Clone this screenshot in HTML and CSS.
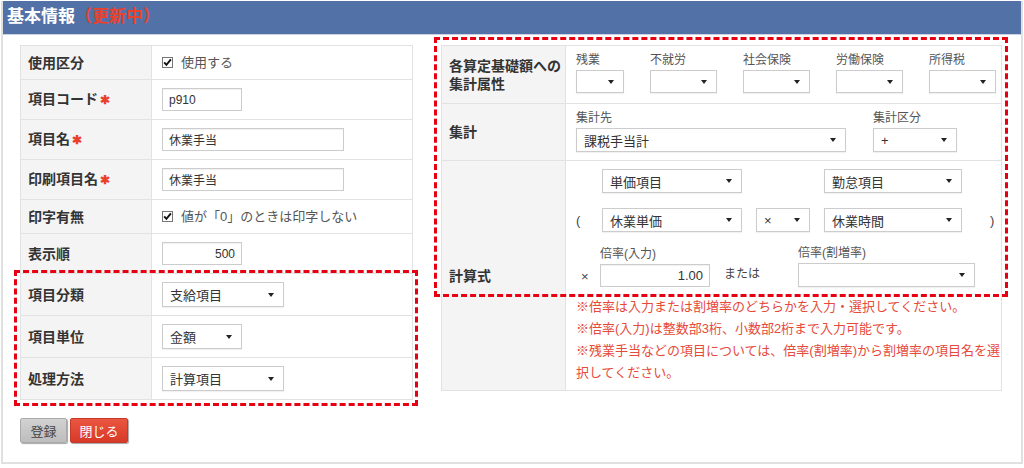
FILE: index.html
```html
<!DOCTYPE html>
<html lang="ja">
<head>
  <meta charset="UTF-8" />
  <title>基本情報</title>
  <link rel="stylesheet" href="styles.css">
</head>
<body>
  <div class="frame">
    <header class="page-head">
      <h1>基本情報<span class="status">（更新中）</span></h1>
    </header>

    <div class="content">
      <div class="left">
        <table class="form-table">
          <colgroup><col class="label-col"><col></colgroup>
          <tr class="row-check">
            <th>使用区分</th>
            <td>
              <label class="check">
                <svg width="11" height="11" viewBox="0 0 11 11"><rect x="0.5" y="0.5" width="10" height="10" fill="#fff" stroke="#777"/><path d="M2.2 5.4 L4.4 7.8 L8.9 2.4" fill="none" stroke="#111" stroke-width="1.9"/></svg>
                使用する
              </label>
            </td>
          </tr>
          <tr class="row-input">
            <th>項目コード<span class="req">✱</span></th>
            <td><input class="text-input w80" type="text" value="p910"></td>
          </tr>
          <tr class="row-input">
            <th>項目名<span class="req">✱</span></th>
            <td><input class="text-input w182" type="text" value="休業手当"></td>
          </tr>
          <tr class="row-input">
            <th>印刷項目名<span class="req">✱</span></th>
            <td><input class="text-input w182" type="text" value="休業手当"></td>
          </tr>
          <tr class="row-check">
            <th>印字有無</th>
            <td>
              <label class="check">
                <svg width="11" height="11" viewBox="0 0 11 11"><rect x="0.5" y="0.5" width="10" height="10" fill="#fff" stroke="#777"/><path d="M2.2 5.4 L4.4 7.8 L8.9 2.4" fill="none" stroke="#111" stroke-width="1.9"/></svg>
                値が「0」のときは印字しない
              </label>
            </td>
          </tr>
          <tr class="row-input">
            <th>表示順</th>
            <td><input class="text-input w80 num" type="text" value="500"></td>
          </tr>
        </table>

        <div class="highlight">
          <table class="form-table">
            <colgroup><col class="label-col"><col></colgroup>
            <tr class="row-select">
              <th>項目分類</th>
              <td><div class="select tall w122">支給項目</div></td>
            </tr>
            <tr class="row-select">
              <th>項目単位</th>
              <td><div class="select tall w80">金額</div></td>
            </tr>
            <tr class="row-select">
              <th>処理方法</th>
              <td><div class="select tall w122">計算項目</div></td>
            </tr>
          </table>
        </div>

        <div class="buttons">
          <button class="btn btn-gray">登録</button>
          <button class="btn btn-red">閉じる</button>
        </div>
      </div>

      <div class="right">
        <div class="highlight-box"></div>
        <table class="form-table">
          <colgroup><col class="label-col-r"><col></colgroup>
          <tr class="row-attr">
            <th>各算定基礎額への集計属性</th>
            <td class="top">
              <div class="attr-list">
                <div class="field"><span class="sub-label">残業</span><div class="select w48"></div></div>
                <div class="field"><span class="sub-label">不就労</span><div class="select w67"></div></div>
                <div class="field"><span class="sub-label">社会保険</span><div class="select w67"></div></div>
                <div class="field"><span class="sub-label">労働保険</span><div class="select w67"></div></div>
                <div class="field"><span class="sub-label">所得税</span><div class="select w67"></div></div>
              </div>
            </td>
          </tr>
          <tr class="row-sum">
            <th>集計</th>
            <td class="top">
              <div class="sum-list">
                <div class="field"><span class="sub-label">集計先</span><div class="select w270">課税手当計</div></div>
                <div class="field"><span class="sub-label">集計区分</span><div class="select w84">+</div></div>
              </div>
            </td>
          </tr>
          <tr class="row-formula">
            <th>計算式</th>
            <td class="top formula-cell">
              <div class="formula">
                <span></span>
                <div class="select w140">単価項目</div>
                <span></span>
                <div class="select w138">勤怠項目</div>
                <span></span>

                <span class="paren">(</span>
                <div class="select w140">休業単価</div>
                <div class="select w54">×</div>
                <div class="select w138">休業時間</div>
                <span class="paren close">)</span>
              </div>

              <div class="rate">
                <span class="op">×</span>
                <div class="field"><span class="sub-label">倍率(入力)</span><input class="text-input w110 num rate-input" type="text" value="1.00"></div>
                <span class="or">または</span>
                <div class="field"><span class="sub-label">倍率(割増率)</span><div class="select w177"></div></div>
              </div>

              <div class="notes">
                <p>※倍率は入力または割増率のどちらかを入力・選択してください。</p>
                <p>※倍率(入力)は整数部3桁、小数部2桁まで入力可能です。</p>
                <p>※残業手当などの項目については、倍率(割増率)から割増率の項目名を選択してください。</p>
              </div>
            </td>
          </tr>
        </table>
      </div>
    </div>
  </div>
</body>
</html>
```

FILE: styles.css
```css
body {
  margin: 0;
  font-family: "Liberation Sans", "Noto Sans CJK JP", sans-serif;
  color: #333;
  background: #fff;
}

.frame {
  margin: 1px 1px 0;
  height: 463px;
  box-sizing: border-box;
  border: 2px solid #e0e0e0;
  border-top: 0;
}

.page-head {
  background: #5271a7;
  height: 33px;
  border-bottom: 1px solid #c9d1e2;
}

.page-head h1 {
  margin: 0;
  padding-left: 4px;
  font-size: 17px;
  line-height: 32px;
  color: #fff;
  font-weight: bold;
}

.status {
  color: #e8412c;
}

.content {
  display: flex;
  align-items: flex-start;
  gap: 28px;
  padding: 10px 0 0 17px;
}

.left {
  width: 393px;
}

.right {
  width: 561px;
  position: relative;
}

.form-table {
  width: 100%;
  border-collapse: collapse;
  table-layout: fixed;
}

.label-col {
  width: 131px;
}

.label-col-r {
  width: 124px;
}

.form-table th,
.form-table td {
  border: 1px solid #e2e2e2;
  padding: 0 0 0 10px;
  vertical-align: middle;
}

.form-table th {
  background: #f4f4f4;
  text-align: left;
  font-size: 14px;
  font-weight: bold;
  line-height: 18px;
  padding-left: 7px;
}

.form-table td.top {
  vertical-align: top;
}

.row-check th { height: 33px; }
.row-input th { height: 39px; }
.row-select th { height: 41px; }
.row-attr th { height: 57px; }
.row-sum th { height: 56px; }
.row-formula th { height: 229px; }

.req {
  color: #e8412c;
  font-size: 12px;
  margin-left: 2px;
}

.check {
  display: flex;
  align-items: center;
  gap: 8px;
  font-size: 13px;
  line-height: 18px;
  color: #555;
}

.text-input {
  box-sizing: border-box;
  height: 23px;
  border: 1px solid #ccc;
  box-shadow: inset 0 1px 1px rgba(0, 0, 0, 0.06);
  padding: 0 6px;
  font-family: inherit;
  font-size: 12px;
  color: #333;
  display: block;
}

.num {
  text-align: right;
}

.rate-input {
  font-size: 13px;
  height: 23px;
}

.w48 { width: 48px; }
.w54 { width: 54px; }
.w67 { width: 67px; }
.w80 { width: 80px; }
.w84 { width: 84px; }
.w110 { width: 110px; }
.w122 { width: 122px; }
.w138 { width: 138px; }
.w140 { width: 140px; }
.w177 { width: 177px; }
.w182 { width: 182px; }
.w270 { width: 270px; }

.select {
  box-sizing: border-box;
  height: 24px;
  display: flex;
  align-items: center;
  padding: 0 9px 0 7px;
  border: 1px solid #ccc;
  box-shadow: 0 1px 1px rgba(0, 0, 0, 0.05);
  background: #fff;
  font-size: 13px;
  color: #333;
}

.select::after {
  content: "";
  margin-left: auto;
  border-top: 4px solid #222;
  border-left: 3px solid transparent;
  border-right: 3px solid transparent;
}

.select.tall {
  height: 25px;
}

.field {
  display: flex;
  flex-direction: column;
}

.sub-label {
  font-size: 12px;
  line-height: 16px;
  color: #555;
  margin-bottom: 2px;
}

.attr-list {
  display: flex;
  gap: 26px;
  padding-top: 6px;
}

.attr-list .select {
  height: 23px;
}

.sum-list {
  display: flex;
  gap: 27px;
  padding-top: 6px;
}

.formula-cell {
  padding-top: 8px !important;
  padding-right: 0 !important;
}

.formula {
  display: grid;
  grid-template-columns: 12px 140px 54px 138px auto;
  column-gap: 14px;
  row-gap: 15px;
  align-items: center;
}

.paren {
  font-size: 13px;
  color: #444;
}

.paren.close {
  padding-left: 14px;
}

.rate {
  display: flex;
  align-items: flex-end;
  margin-top: 13px;
}

.op {
  width: 24px;
  padding-left: 5px;
  box-sizing: border-box;
  font-size: 13px;
  color: #444;
  padding-bottom: 3px;
}

.or {
  width: 88px;
  padding-left: 14px;
  box-sizing: border-box;
  font-size: 12px;
  color: #444;
  padding-bottom: 6px;
}

.notes {
  margin-top: 9px;
  color: #e64a3b;
  font-size: 13px;
  line-height: 22px;
}

.notes p {
  margin: 0;
}

.highlight {
  position: relative;
  margin-top: -1px;
}

.highlight::after {
  content: "";
  position: absolute;
  top: -3px;
  left: -6px;
  right: -5px;
  bottom: -6px;
  border: 3px dashed #e60012;
  pointer-events: none;
}

.highlight-box {
  position: absolute;
  top: -8px;
  left: -7px;
  width: 574px;
  height: 260px;
  box-sizing: border-box;
  border: 3px dashed #e60012;
  pointer-events: none;
}

.buttons {
  display: flex;
  gap: 3px;
  margin-top: 18px;
}

.btn {
  height: 25px;
  padding: 0;
  font-family: inherit;
  font-size: 13px;
  border-radius: 2px;
  cursor: pointer;
  box-shadow: 1px 1px 1px rgba(0, 0, 0, 0.35);
}

.btn-gray {
  width: 47px;
  background: linear-gradient(#d2d2d2, #bdbdbd);
  border: 1px solid #aaa;
  color: #444;
}

.btn-red {
  width: 58px;
  background: linear-gradient(#ea5640, #d73a27);
  border: 1px solid #c5382a;
  color: #fff;
}
```
